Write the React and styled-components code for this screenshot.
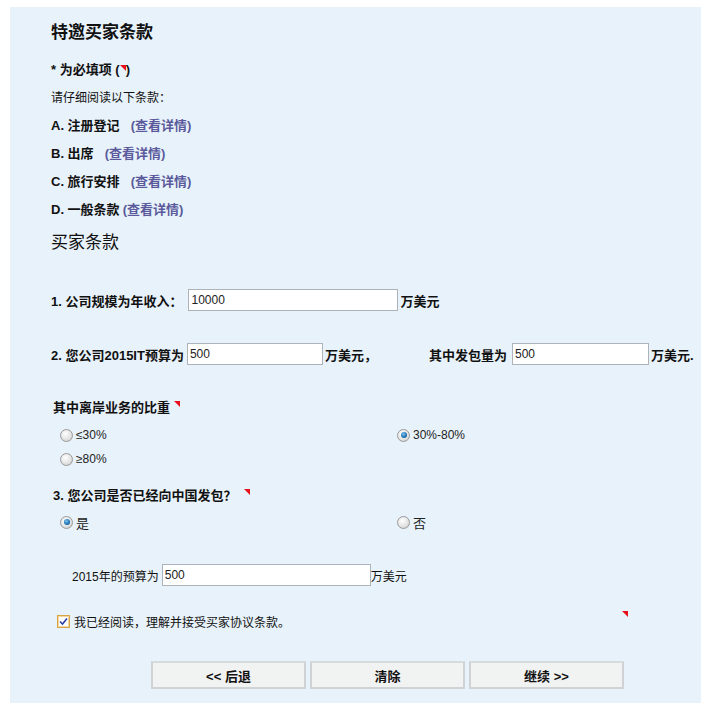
import React from "react";
import styled, { createGlobalStyle } from "styled-components";

const Global = createGlobalStyle`
  html, body { margin: 0; padding: 0; background: #ffffff; }
  body { font-family: "Liberation Sans", "Noto Sans CJK SC", sans-serif; font-size: 12px; color: #111; }
`;

const Page = styled.div`
  padding: 7px 10px 15px 10px;
`;

const Panel = styled.div`
  width: 691px;
  box-sizing: border-box;
  background: #e8f2fa;
  padding: 13px 4px 14px 41px;
`;

const Title = styled.div`
  font-size: 17px;
  line-height: 26px;
  height: 26px;
  font-weight: ${(p) => (p.$bold ? 700 : 400)};
  margin-top: ${(p) => p.$mt || 0}px;
  ${(p) => p.$lh && `line-height: ${p.$lh}px; height: ${p.$lh}px;`}
`;

const Line = styled.div`
  height: 28px;
  line-height: 28px;
  display: flex;
  align-items: center;
  font-size: ${(p) => (p.$bold ? 13 : 12)}px;
  font-weight: ${(p) => (p.$bold ? 700 : 400)};
  margin-top: ${(p) => p.$mt || 0}px;
  white-space: nowrap;
`;

const Link = styled.span`
  color: #5a5a9c;
  font-weight: 700;
  margin-left: ${(p) => p.$ml || 0}px;
`;

const Marker = styled.span`
  display: inline-block;
  flex-shrink: 0;
  width: 0;
  height: 0;
  border-top: 6px solid #e8101a;
  border-left: 6px solid transparent;
  align-self: flex-start;
  margin-top: ${(p) => p.$mt || 0}px;
  margin-left: ${(p) => (p.$auto ? "auto" : `${p.$ml || 0}px`)};
`;

const FieldRow = styled.div`
  display: flex;
  align-items: center;
  height: 22px;
  margin-top: ${(p) => p.$mt || 0}px;
  padding-left: ${(p) => p.$pl || 0}px;
  font-size: ${(p) => (p.$bold ? 13 : 12)}px;
  font-weight: ${(p) => (p.$bold ? 700 : 400)};
  white-space: nowrap;
`;

const Input = styled.input`
  box-sizing: border-box;
  flex-shrink: 0;
  width: ${(p) => p.$w}px;
  height: 22px;
  border: 1px solid #aeb3b9;
  background: #fff;
  font-family: "Liberation Sans", sans-serif;
  font-weight: 400;
  font-size: 12px;
  color: #222;
  padding: 0 2px;
  margin: 0 ${(p) => p.$mr ?? 2}px 0 ${(p) => p.$ml ?? 2}px;
  outline: none;
`;

const Spacer = styled.span`
  display: inline-block;
  flex-shrink: 0;
  width: ${(p) => p.$w}px;
`;

const Label = styled.div`
  height: 20px;
  line-height: 20px;
  display: flex;
  font-size: 13px;
  font-weight: 700;
  margin-top: ${(p) => p.$mt || 0}px;
  padding-left: 2px;
  white-space: nowrap;
`;

const RadioGrid = styled.div`
  display: grid;
  grid-template-columns: 337px 1fr;
  grid-auto-rows: 24px;
  padding-left: 9px;
  margin-top: ${(p) => p.$mt || 0}px;
`;

const RadioItem = styled.label`
  display: flex;
  align-items: center;
  gap: 3px;
  font-size: ${(p) => (p.$cjk ? 13 : 12)}px;
  color: #222;
`;

const RadioDot = styled.span`
  width: 13px;
  height: 13px;
  border-radius: 50%;
  box-sizing: border-box;
  border: 1px solid #9a9a9a;
  background: radial-gradient(circle at 40% 35%, #ffffff 0%, #e4e4e4 55%, #c4c4c4 100%);
  display: flex;
  align-items: center;
  justify-content: center;
  &::after {
    content: "";
    display: ${(p) => (p.$on ? "block" : "none")};
    width: 6px;
    height: 6px;
    border-radius: 50%;
    background: radial-gradient(circle at 40% 35%, #7fc4f0 0%, #1a6fb0 60%, #0b4a80 100%);
  }
`;

const CheckRow = styled.div`
  display: flex;
  align-items: center;
  height: 20px;
  width: 571px;
  margin-top: ${(p) => p.$mt || 0}px;
  padding-left: 6px;
  font-size: 12px;
  white-space: nowrap;
`;

const CheckBox = styled.span`
  width: 13px;
  height: 13px;
  box-sizing: border-box;
  border: 1px solid #d9a446;
  background: #fff;
  display: flex;
  align-items: center;
  justify-content: center;
  margin-right: 4px;
  box-shadow: inset 0 0 0 1px #f3d6a0;
`;

const Buttons = styled.div`
  display: flex;
  gap: 4px;
  margin-top: 30px;
  padding-left: 100px;
`;

const Button = styled.button`
  width: 155px;
  height: 28px;
  box-sizing: border-box;
  border: 2px solid #cfd3d6;
  border-top-color: #d8dbdd;
  background: #f1f2f2;
  font-family: "Liberation Sans", "Noto Sans CJK SC", sans-serif;
  font-size: 13px;
  font-weight: 700;
  color: #111;
  padding: 0;
`;

const terms = [
  ["A. 注册登记", 11],
  ["B. 出席", 11],
  ["C. 旅行安排", 11],
  ["D. 一般条款", 3],
];

export default function App() {
  return (
    <Page>
      <Global />
      <Panel>
        <Title $bold>特邀买家条款</Title>
        <Line $bold $mt={10}>
          * 为必填项 (<Marker $mt={9} />)
        </Line>
        <Line>请仔细阅读以下条款：</Line>
        {terms.map(([t, ml]) => (
          <Line $bold key={t}>
            {t}
            <Link $ml={ml}>(查看详情)</Link>
          </Line>
        ))}
        <Title $lh={38}>买家条款</Title>

        <FieldRow $bold $mt={27}>
          1. 公司规模为年收入：
          <Input $w={210} $ml={6} defaultValue="10000" />
          万美元
        </FieldRow>

        <FieldRow $bold $mt={32}>
          2. 您公司2015IT预算为
          <Input $w={136} $ml={3} defaultValue="500" />
          万美元，
          <Spacer $w={52} />
          其中发包量为
          <Input $w={137} $ml={5} defaultValue="500" />
          万美元.
        </FieldRow>

        <Label $mt={33}>
          其中离岸业务的比重
          <Marker $mt={3} $ml={4} />
        </Label>
        <RadioGrid $mt={5}>
          <RadioItem>
            <RadioDot />≤30%
          </RadioItem>
          <RadioItem>
            <RadioDot $on />
            30%-80%
          </RadioItem>
          <RadioItem>
            <RadioDot />≥80%
          </RadioItem>
        </RadioGrid>

        <Label $mt={15}>
          3. 您公司是否已经向中国发包？
          <Marker $mt={3} $ml={8} />
        </Label>
        <RadioGrid $mt={4}>
          <RadioItem $cjk>
            <RadioDot $on />是
          </RadioItem>
          <RadioItem $cjk>
            <RadioDot />否
          </RadioItem>
        </RadioGrid>

        <FieldRow $mt={30} $pl={21}>
          2015年的预算为
          <Input $w={209} $ml={3} $mr={0} defaultValue="500" />
          万美元
        </FieldRow>

        <CheckRow $mt={25}>
          <CheckBox>
            <svg width="9" height="9" viewBox="0 0 9 9">
              <path d="M1 4.5 L3.5 7 L8 1.5" fill="none" stroke="#2a3fa8" strokeWidth="1.6" />
            </svg>
          </CheckBox>
          我已经阅读，理解并接受买家协议条款。
          <Marker $auto />
        </CheckRow>

        <Buttons>
          <Button>&lt;&lt; 后退</Button>
          <Button>清除</Button>
          <Button>继续 &gt;&gt;</Button>
        </Buttons>
      </Panel>
    </Page>
  );
}
